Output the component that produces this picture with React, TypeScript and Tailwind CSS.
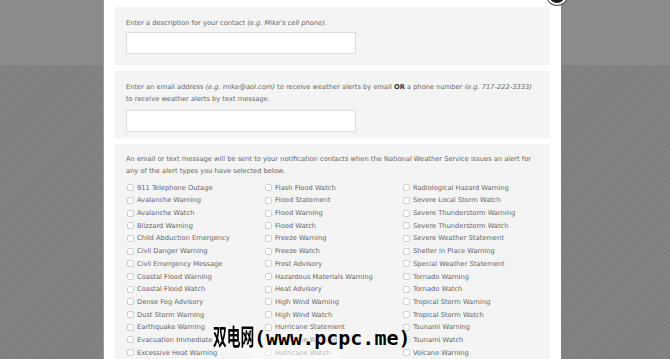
const col1 = [
  '911 Telephone Outage',
  'Avalanche Warning',
  'Avalanche Watch',
  'Blizzard Warning',
  'Child Abduction Emergency',
  'Civil Danger Warning',
  'Civil Emergency Message',
  'Coastal Flood Warning',
  'Coastal Flood Watch',
  'Dense Fog Advisory',
  'Dust Storm Warning',
  'Earthquake Warning',
  'Evacuation Immediate',
  'Excessive Heat Warning',
];

const col2 = [
  'Flash Flood Watch',
  'Flood Statement',
  'Flood Warning',
  'Flood Watch',
  'Freeze Warning',
  'Freeze Watch',
  'Frost Advisory',
  'Hazardous Materials Warning',
  'Heat Advisory',
  'High Wind Warning',
  'High Wind Watch',
  'Hurricane Statement',
  'Hurricane Warning',
  'Hurricane Watch',
];

const col3 = [
  'Radiological Hazard Warning',
  'Severe Local Storm Watch',
  'Severe Thunderstorm Warning',
  'Severe Thunderstorm Watch',
  'Severe Weather Statement',
  'Shelter in Place Warning',
  'Special Weather Statement',
  'Tornado Warning',
  'Tornado Watch',
  'Tropical Storm Warning',
  'Tropical Storm Watch',
  'Tsunami Warning',
  'Tsunami Watch',
  'Volcano Warning',
];

function AlertColumn({ items }: { items: string[] }) {
  return (
    <div className="flex w-[138px] flex-col">
      {items.map((label) => (
        <label key={label} className="flex h-[12.7px] items-center whitespace-nowrap">
          <span className="h-[7px] w-[7px] shrink-0 rounded-[2px] border border-[#cfcfcf] bg-white" />
          <span className="ml-[3px]">{label}</span>
        </label>
      ))}
    </div>
  );
}

export default function App() {
  return (
    <div
      className="relative h-[359px] w-full overflow-hidden text-[6.7px] leading-[12px] text-[#666]"
      style={{ fontFamily: '"DejaVu Sans", Verdana, sans-serif' }}
    >
      {/* page behind the overlay */}
      <div className="flex h-full flex-col">
        <div className="h-[65px] bg-[#8b8b8b]" />
        <div className="flex-1 bg-[#808080] bg-[repeating-linear-gradient(135deg,#7e7e7e_0px,#7e7e7e_1px,#838383_1px,#838383_3px)]" />
      </div>

      {/* modal */}
      <div className="absolute left-[103px] top-0 flex h-full w-[458px] flex-col gap-[6px] border-l border-[#9a9a9a] bg-white pl-[11px] pr-[11px] pt-[7px]">
        <section className="h-[58px] bg-[#f4f4f4] px-[11px] pt-[10px]">
          <p>
            Enter a description for your contact <i>(e.g. Mike's cell phone)</i>.
          </p>
          <div className="mt-[3px] h-[22px] w-[230px] border border-[#dcdcdc] bg-white" />
        </section>

        <section className="h-[68px] bg-[#f4f4f4] px-[11px] pt-[10px]">
          <p className="pr-[6px]">
            Enter an email address <i>(e.g. mike@aol.com)</i> to receive weather alerts by email{' '}
            <b className="text-[#333]">OR</b> a phone number <i>(e.g. 717-222-3333)</i> to receive
            weather alerts by text message.
          </p>
          <div className="mt-[5px] h-[22px] w-[230px] border border-[#dcdcdc] bg-white" />
        </section>

        <section className="flex-1 bg-[#f4f4f4] pl-[11px] pt-[9px]">
          <p className="whitespace-nowrap">
            An email or text message will be sent to your notification contacts when the National
            Weather Service issues an alert for
            <br />
            any of the alert types you have selected below.
          </p>
          <div className="mt-[4px] flex pl-[1px]">
            <AlertColumn items={col1} />
            <AlertColumn items={col2} />
            <AlertColumn items={col3} />
          </div>
        </section>

        {/* close button */}
        <div className="absolute left-[443px] top-[-15px] h-[20px] w-[20px] rounded-full border-2 border-white bg-[#1c1c1c] shadow-[0_0_0_1px_#555]" />
      </div>

      {/* watermark */}
      <div className="absolute left-[246px] top-[340px] h-[24px] w-[100px] rounded-full bg-white/60 blur-[8px]" />
      <div className="absolute left-[213px] top-[321px] flex items-baseline font-semibold leading-[28px] text-black [text-shadow:0_0_1px_#fff,0_0_2px_#fff,0_0_3px_#fff]">
        <span className="inline-block w-[41px] whitespace-nowrap">
          <span
            className="inline-block origin-left scale-x-[0.6] text-[23px]"
            style={{ fontFamily: '"Noto Sans CJK SC", sans-serif' }}
          >
            双电网
          </span>
        </span>
        <span className="text-[20px]" style={{ fontFamily: '"DejaVu Sans Mono", monospace' }}>
          (www.pcpc.me)
        </span>
      </div>
    </div>
  );
}
